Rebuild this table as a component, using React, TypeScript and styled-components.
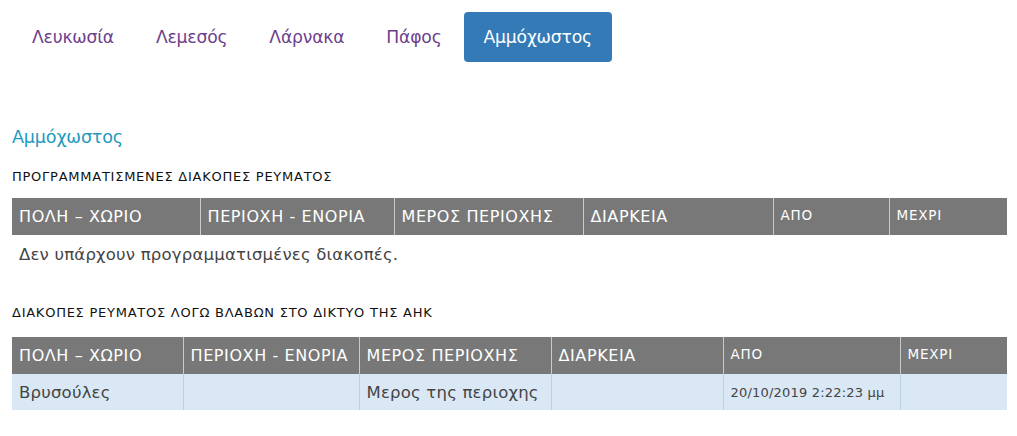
import React from "react";
import styled, { createGlobalStyle } from "styled-components";

const Global = createGlobalStyle`
  html, body { margin: 0; padding: 0; background: #fff; }
  body { font-family: "DejaVu Sans", "Noto Sans", sans-serif; color: #333; }
`;

const Page = styled.div`
  padding: 12px 11px 0 12px;
`;

const Nav = styled.ul`
  list-style: none;
  margin: 0;
  padding: 0;
  display: flex;
  align-items: center;
`;

const Pill = styled.li<{ $active?: boolean }>`
  height: 50px;
  padding: 0 20px;
  margin-right: 2px;
  display: flex;
  align-items: center;
  border-radius: 4px;
  font-size: 17.2px;
  letter-spacing: -0.2px;
  color: ${(p) => (p.$active ? "#fff" : "#6e3f8c")};
  background: ${(p) => (p.$active ? "#337ab7" : "transparent")};
`;

const Heading = styled.h3`
  margin: 64px 0 0 0;
  font-size: 17.6px;
  font-weight: normal;
  color: #1f9ac0;
  line-height: 22px;
  letter-spacing: -0.2px;
`;

const SectionTitle = styled.h4<{ $top: number }>`
  margin: ${(p) => p.$top}px 0 0 0;
  font-size: 13px;
  font-weight: normal;
  color: #111;
  line-height: 16px;
  letter-spacing: 0.75px;
`;

const Table = styled.table<{ $top: number }>`
  width: 995px;
  margin-top: ${(p) => p.$top}px;
  border-collapse: collapse;
  table-layout: fixed;
`;

const Th = styled.th<{ $small?: boolean }>`
  background: #787878;
  color: #fff;
  font-weight: normal;
  text-align: left;
  height: 37px;
  box-sizing: border-box;
  padding: ${(p) => (p.$small ? "0 0 3px 7px" : "0 0 0 7px")};
  font-size: ${(p) => (p.$small ? "13.5px" : "16px")};
  letter-spacing: ${(p) => (p.$small ? "0.8px" : "0.6px")};
  border-left: 1px solid #c9c9c9;
  white-space: nowrap;
  overflow: hidden;
  &:first-child { border-left: none; }
`;

const Td = styled.td<{ $small?: boolean }>`
  background: #d9e8f4;
  color: #444;
  height: 36px;
  box-sizing: border-box;
  padding: 0 0 0 7px;
  font-size: ${(p) => (p.$small ? "13px" : "16.5px")};
  letter-spacing: 0.2px;
  border-left: 1px solid #bfcfdc;
  white-space: nowrap;
  &:first-child { border-left: none; }
`;

const EmptyCell = styled.td`
  height: 38px;
  padding: 0 0 0 7px;
  font-size: 16.5px;
  color: #444;
  letter-spacing: 0.2px;
`;

const cities = ["Λευκωσία", "Λεμεσός", "Λάρνακα", "Πάφος", "Αμμόχωστος"];

type Col = { label: string; width: number; small?: boolean };

const cols1: Col[] = [
  { label: "ΠΟΛΗ – ΧΩΡΙΟ", width: 188 },
  { label: "ΠΕΡΙΟΧΗ - ΕΝΟΡΙΑ", width: 194 },
  { label: "ΜΕΡΟΣ ΠΕΡΙΟΧΗΣ", width: 189 },
  { label: "ΔΙΑΡΚΕΙΑ", width: 190 },
  { label: "ΑΠΟ", width: 116, small: true },
  { label: "ΜΕΧΡΙ", width: 118, small: true },
];

const cols2: Col[] = [
  { label: "ΠΟΛΗ – ΧΩΡΙΟ", width: 171 },
  { label: "ΠΕΡΙΟΧΗ - ΕΝΟΡΙΑ", width: 176 },
  { label: "ΜΕΡΟΣ ΠΕΡΙΟΧΗΣ", width: 192 },
  { label: "ΔΙΑΡΚΕΙΑ", width: 172 },
  { label: "ΑΠΟ", width: 177, small: true },
  { label: "ΜΕΧΡΙ", width: 107, small: true },
];

const Head = ({ cols }: { cols: Col[] }) => (
  <>
    <colgroup>
      {cols.map((c) => (
        <col key={c.label} style={{ width: c.width }} />
      ))}
    </colgroup>
    <thead>
      <tr>
        {cols.map((c) => (
          <Th key={c.label} $small={c.small}>
            {c.label}
          </Th>
        ))}
      </tr>
    </thead>
  </>
);

export default function App() {
  return (
    <Page>
      <Global />
      <Nav>
        {cities.map((c) => (
          <Pill key={c} $active={c === "Αμμόχωστος"}>
            {c}
          </Pill>
        ))}
      </Nav>
      <Heading>Αμμόχωστος</Heading>
      <SectionTitle $top={21}>ΠΡΟΓΡΑΜΜΑΤΙΣΜΕΝΕΣ ΔΙΑΚΟΠΕΣ ΡΕΥΜΑΤΟΣ</SectionTitle>
      <Table $top={13}>
        <Head cols={cols1} />
        <tbody>
          <tr>
            <EmptyCell colSpan={6}>Δεν υπάρχουν προγραμματισμένες διακοπές.</EmptyCell>
          </tr>
        </tbody>
      </Table>
      <SectionTitle $top={32}>ΔΙΑΚΟΠΕΣ ΡΕΥΜΑΤΟΣ ΛΟΓΩ ΒΛΑΒΩΝ ΣΤΟ ΔΙΚΤΥΟ ΤΗΣ ΑΗΚ</SectionTitle>
      <Table $top={16}>
        <Head cols={cols2} />
        <tbody>
          <tr>
            <Td>Βρυσούλες</Td>
            <Td></Td>
            <Td>Μερος της περιοχης</Td>
            <Td></Td>
            <Td $small>20/10/2019 2:22:23 μμ</Td>
            <Td></Td>
          </tr>
        </tbody>
      </Table>
    </Page>
  );
}
